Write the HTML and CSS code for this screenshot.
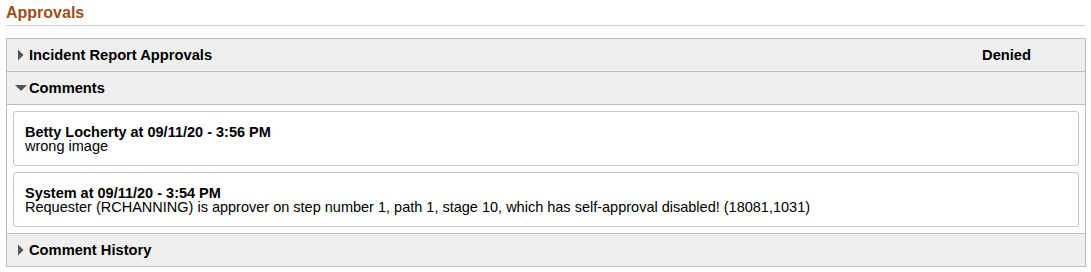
FILE: index.html
```html
<!DOCTYPE html>
<html lang="en">

<head>
    <meta charset="UTF-8">
    <title>Approvals</title>
    <link rel="stylesheet" href="styles.css">
</head>

<body>
<div class="page">
    <h1 class="page-title">Approvals</h1>

    <div class="group-box">
        <!-- approvals summary -->
        <div class="section-head">
            <svg class="twisty" width="12" height="12" viewBox="0 0 12 12"><polygon points="3,0.5 8.5,6 3,11.5" /></svg>
            <span class="head-label">Incident Report Approvals</span>
            <span class="head-status">Denied</span>
        </div>

        <!-- comments -->
        <div class="section-head">
            <svg class="twisty" width="12" height="12" viewBox="0 0 12 12"><polygon points="0,3 12,3 6,9" /></svg>
            <span class="head-label">Comments</span>
        </div>
        <div class="comment-list">
            <div class="comment">
                <div class="comment-by">Betty Locherty at 09/11/20 - 3:56 PM</div>
                <div class="comment-text">wrong image</div>
            </div>
            <div class="comment">
                <div class="comment-by">System at 09/11/20 - 3:54 PM</div>
                <div class="comment-text">Requester (RCHANNING) is approver on step number 1, path 1, stage 10, which has self-approval disabled! (18081,1031)</div>
            </div>
        </div>

        <!-- history -->
        <div class="section-head last">
            <svg class="twisty" width="12" height="12" viewBox="0 0 12 12"><polygon points="3,0.5 8.5,6 3,11.5" /></svg>
            <span class="head-label">Comment History</span>
        </div>
    </div>
</div>
</body>

</html>
```

FILE: styles.css
```css
body {
    font-family: "Liberation Sans", Arial, sans-serif;
    margin: 0;
    padding: 0;
    background-color: #fff;
    color: #000;
}

.page {
    padding: 0 6px;
}

/* page title */
.page-title {
    margin: 0;
    padding: 3px 0 3px;
    font-size: 16px;
    line-height: 19px;
    font-weight: bold;
    color: #9c4f1a;
    border-bottom: 1px solid #d0d0d0;
}

/* group box */
.group-box {
    margin-top: 12px;
    border: 1px solid #bdbdbd;
    width: 1078px;
}

.section-head {
    display: flex;
    align-items: center;
    height: 32px;
    padding-left: 8px;
    background-color: #efefef;
    border-bottom: 1px solid #bdbdbd;
    font-size: 14.7px;
    font-weight: bold;
}

.section-head.last {
    border-bottom: none;
}

.twisty {
    fill: #555;
    margin-right: 2px;
}

.head-label {
    flex: 1;
}

.head-status {
    margin-right: 54px;
}

/* comments */
.comment-list {
    display: flex;
    flex-direction: column;
    gap: 6px;
    padding: 6px;
    border-bottom: 1px solid #bdbdbd;
}

.comment {
    height: 53px;
    box-sizing: content-box;
    border: 1px solid #c6c6c6;
    border-radius: 3px;
    background-color: #fff;
    padding: 0 11px;
    font-size: 14.5px;
    line-height: 14px;
}

.comment-by {
    font-weight: bold;
    margin-top: 13px;
}
```
